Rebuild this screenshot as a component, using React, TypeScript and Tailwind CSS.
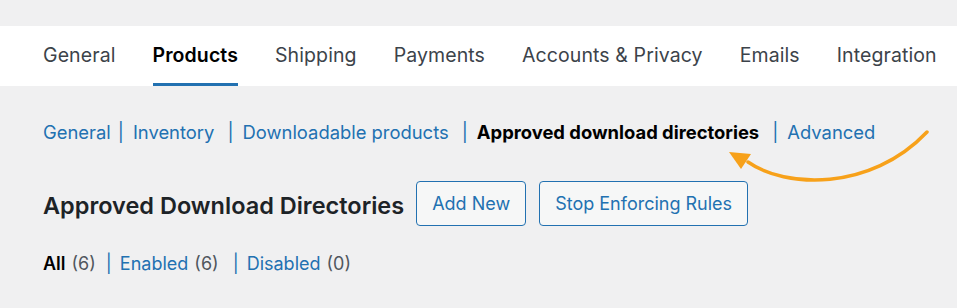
const tabs = [
  "General",
  "Products",
  "Shipping",
  "Payments",
  "Accounts & Privacy",
  "Emails",
  "Integration",
];

const sections = [
  { label: "General", current: false },
  { label: "Inventory", current: false },
  { label: "Downloadable products", current: false },
  { label: "Approved download directories", current: true },
  { label: "Advanced", current: false },
];

const filters = [
  { label: "All", count: 6, current: true },
  { label: "Enabled", count: 6, current: false },
  { label: "Disabled", count: 0, current: false },
];

function Arrow() {
  return (
    <svg
      className="pointer-events-none absolute top-0 left-0"
      width="957"
      height="308"
      viewBox="0 0 957 308"
    >
      <path
        d="M927 132 C 870 192, 785 188, 748 162"
        fill="none"
        stroke="#f7a11a"
        strokeWidth="3.5"
        strokeLinecap="round"
      />
      <path d="M729 152 L751 154 L741 169 Z" fill="#f7a11a" />
    </svg>
  );
}

export default function App() {
  return (
    <div
      className="relative h-[308px] w-[957px] overflow-hidden bg-[#f0f0f1] text-[#3c434a]"
      style={{ fontFamily: "Inter, 'Liberation Sans', sans-serif" }}
    >
      <div className="h-[26px]" />

      {/* Main tabs */}
      <nav className="flex h-[60px] items-stretch gap-[37px] bg-white pl-[43px]">
        {tabs.map((tab) => (
          <div
            key={tab}
            className={`flex items-center border-b-[3px] pt-[3px] text-[19.5px] tracking-[0.1px] ${
              tab === "Products"
                ? "border-[#2271b1] font-semibold text-black"
                : "border-transparent"
            }`}
          >
            {tab}
          </div>
        ))}
      </nav>

      {/* Section links */}
      <ul className="mt-[33px] flex items-center pl-[43px] text-[18.4px]">
        {sections.map((s, i) => (
          <li key={s.label} className="flex items-center">
            {i > 0 && (
              <span
                className={`mr-[9px] text-[#2271b1] ${i === 1 ? "ml-[7px]" : "ml-[13px]"}`}
              >
                |
              </span>
            )}
            <span
              className={s.current ? "font-bold text-black" : "text-[#2271b1]"}
            >
              {s.label}
            </span>
          </li>
        ))}
      </ul>

      {/* Heading and actions */}
      <div className="mt-[34px] flex items-center pl-[43px]">
        <h1 className="mr-[12px] pt-[6px] text-[23.5px] font-semibold text-[#1d2327]">
          Approved Download Directories
        </h1>
        <button className="mr-[13px] h-[45px] rounded-[4px] border border-[#2271b1] bg-[#f6f7f7] px-[15px] text-[18px] text-[#2271b1]">
          Add New
        </button>
        <button className="h-[45px] rounded-[4px] border border-[#2271b1] bg-[#f6f7f7] px-[15px] text-[18px] text-[#2271b1]">
          Stop Enforcing Rules
        </button>
      </div>

      {/* Status filters */}
      <ul className="mt-[24px] flex items-center pl-[43px] text-[18px]">
        {filters.map((f, i) => (
          <li key={f.label} className="flex items-center">
            {i > 0 && (
              <span
                className={`mr-[8px] text-[#2271b1] ${i === 1 ? "ml-[10px]" : "ml-[14px]"}`}
              >
                |
              </span>
            )}
            <span
              className={
                f.current ? "font-semibold text-black" : "text-[#2271b1]"
              }
            >
              {f.label}
            </span>
            <span className="ml-[6px] text-[#50575e]">({f.count})</span>
          </li>
        ))}
      </ul>

      <Arrow />
    </div>
  );
}
